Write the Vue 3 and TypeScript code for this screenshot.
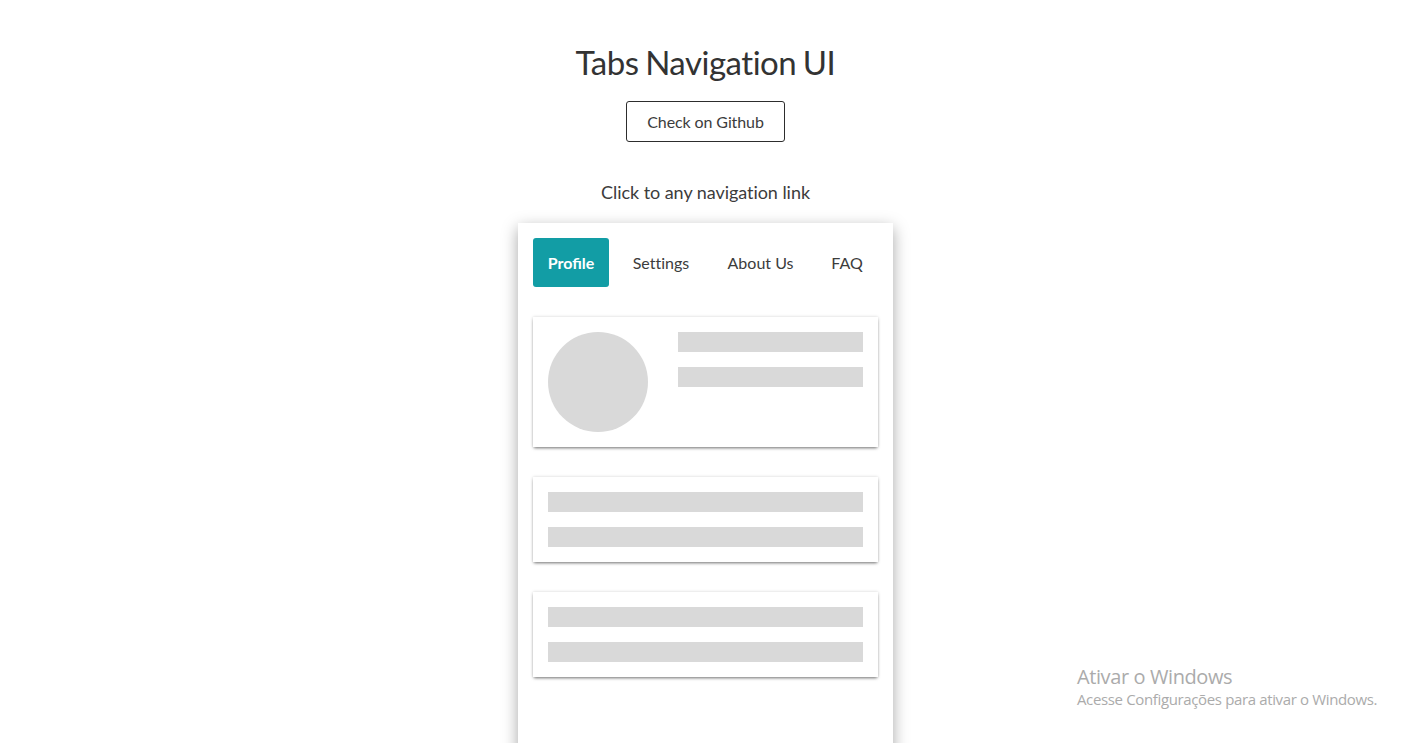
<script setup lang="ts">
import { ref } from 'vue'

const tabs: string[] = ['Profile', 'Settings', 'About Us', 'FAQ']
const active = ref<string>('Profile')
</script>

<template>
  <main class="page">
    <h1 class="title">Tabs Navigation UI</h1>
    <a class="github" href="#">Check on Github</a>
    <p class="hint">Click to any navigation link</p>
    <section class="panel">
      <nav class="tabs">
        <button
          v-for="tab in tabs"
          :key="tab"
          class="tab"
          :class="{ active: tab === active }"
          @click="active = tab"
        >{{ tab }}</button>
      </nav>
      <div class="cards">
        <article class="card profile">
          <div class="avatar"></div>
          <div class="lines">
            <div class="line"></div>
            <div class="line"></div>
          </div>
        </article>
        <article v-for="n in 2" :key="n" class="card lines">
          <div class="line"></div>
          <div class="line"></div>
        </article>
      </div>
    </section>
    <aside class="notice">
      <div class="notice-title">Ativar o Windows</div>
      <div class="notice-text">Acesse Configurações para ativar o Windows.</div>
    </aside>
  </main>
</template>

<style>
body {
  margin: 0;
  overflow: hidden;
  background: #fff;
}
</style>

<style scoped>
.page {
  box-sizing: border-box;
  width: 1411px;
  height: 743px;
  overflow: hidden;
  padding-top: 42px;
  display: flex;
  flex-direction: column;
  align-items: center;
  font-family: Lato, sans-serif;
  font-size: 16px;
  font-variant-ligatures: none;
  color: #3c3c3c;
}
.title {
  margin: 0;
  font-size: 33px;
  line-height: 40px;
  font-weight: 400;
  letter-spacing: -0.48px;
  word-spacing: -1.4px;
  color: #333;
  white-space: nowrap;
}
.github {
  box-sizing: border-box;
  flex: none;
  width: 159px;
  height: 41px;
  margin-top: 19px;
  border: 1px solid #2d2d2d;
  border-radius: 3px;
  line-height: 39px;
  letter-spacing: -0.1px;
  text-align: center;
  color: inherit;
  text-decoration: none;
}
.hint {
  margin: 38px 0 0;
  font-size: 18px;
  line-height: 24px;
  letter-spacing: -0.05px;
}
.panel {
  box-sizing: border-box;
  flex: none;
  width: 375px;
  height: 600px;
  margin-top: 19px;
  padding: 15px;
  background: #fff;
  box-shadow: 0 5px 15px rgba(0, 0, 0, 0.35);
}
.tabs {
  display: grid;
  grid-template-columns: 76px 87px 95px 61px;
  column-gap: 8.5px;
}
.tab {
  height: 49px;
  padding: 0;
  border: 0;
  border-radius: 3px;
  background: none;
  font: inherit;
  font-variant-ligatures: none;
  color: inherit;
  white-space: nowrap;
}
.tab.active {
  background: #129da5;
  color: #fff;
  font-weight: 700;
  font-variant-ligatures: normal;
}
.cards {
  display: flex;
  flex-direction: column;
  gap: 30px;
  margin-top: 30px;
}
.card {
  padding: 15px;
  box-shadow: 0 2px 3px -1px rgba(0, 0, 0, 0.5), 0 0 3px rgba(0, 0, 0, 0.17);
}
.profile {
  display: flex;
  gap: 30px;
}
.profile .lines {
  flex: 1;
}
.avatar {
  width: 100px;
  height: 100px;
  border-radius: 50%;
  background: #d9d9d9;
}
.lines {
  display: flex;
  flex-direction: column;
  gap: 15px;
}
.line {
  height: 20px;
  background: #d9d9d9;
}
.notice {
  position: absolute;
  left: 1077px;
  top: 664px;
  font-family: "Open Sans", sans-serif;
  color: #ababab;
  white-space: nowrap;
}
.notice-title {
  font-size: 20px;
  line-height: 26px;
  letter-spacing: -0.4px;
}
.notice-text {
  font-size: 15px;
  line-height: 18px;
  letter-spacing: -0.36px;
}
</style>
